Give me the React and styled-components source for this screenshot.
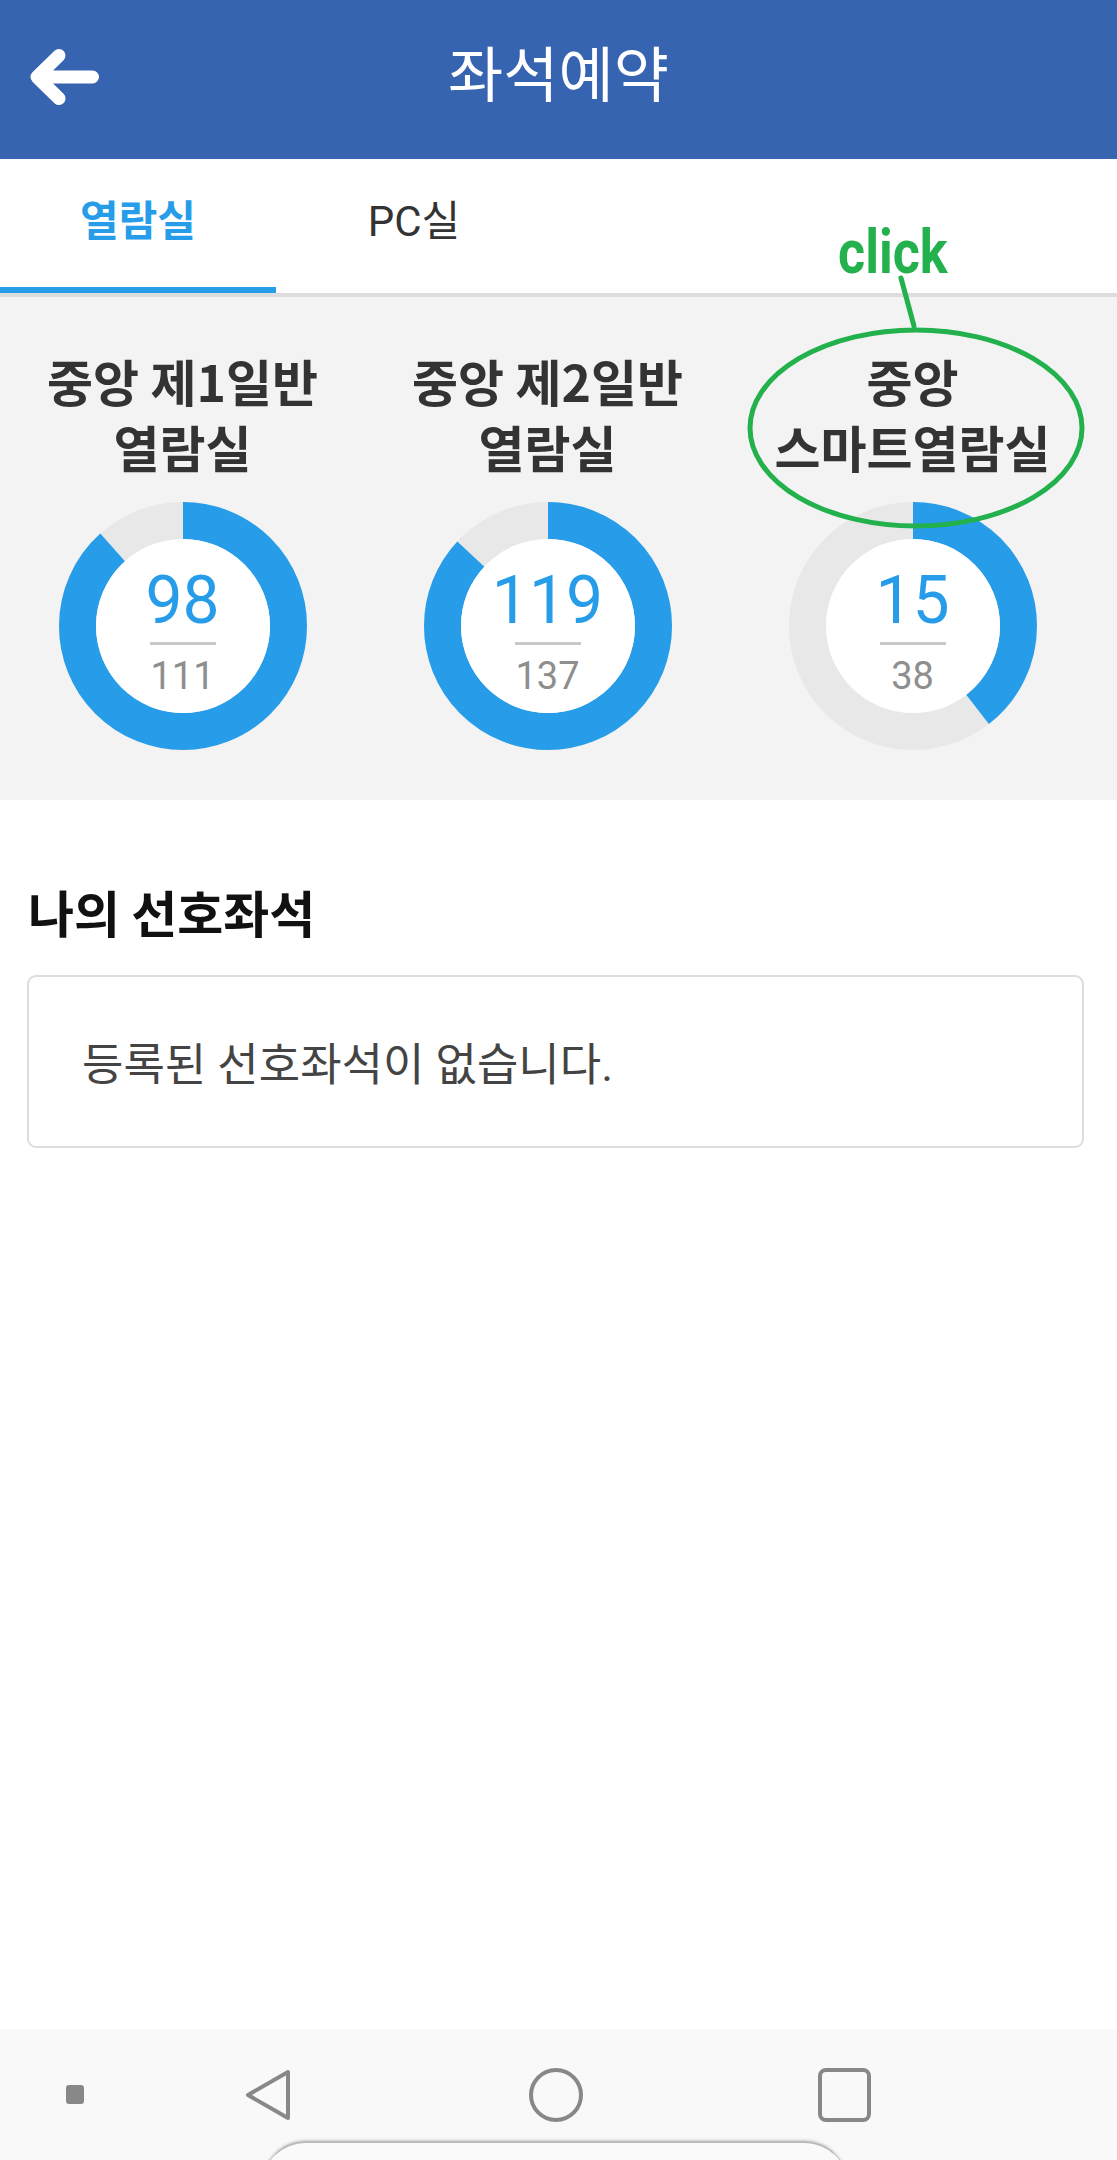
import styled, { createGlobalStyle } from "styled-components"

const GlobalStyle = createGlobalStyle`
  html, body {
    margin: 0;
    padding: 0;
    background: #ffffff;
  }
  body {
    font-family: Roboto, "Noto Sans CJK KR", sans-serif;
  }
`

const rooms = [
    { name: ["중앙 제1일반", "열람실"], free: 98, total: 111 },
    { name: ["중앙 제2일반", "열람실"], free: 119, total: 137 },
    { name: ["중앙", "스마트열람실"], free: 15, total: 38 },
]

const Page = styled.div`
    position: relative;
    min-height: 100vh;
    display: flex;
    flex-direction: column;
    overflow: hidden;
`

const Header = styled.header`
    height: 159px;
    background-color: #3764b0;
    display: grid;
    grid-template-columns: 1fr auto 1fr;
    align-items: center;
    padding-bottom: 6px;
    box-sizing: border-box;
`

const BackButton = styled.div`
    padding-left: 29px;
    display: flex;
    align-items: center;
`

const Title = styled.h1`
    margin: 0;
    color: #ffffff;
    font-size: 60px;
    font-weight: 400;
    line-height: 1.2;
`

const Tabs = styled.nav`
    display: flex;
    height: 138px;
    border-bottom: 4px solid #dddddd;
    box-sizing: border-box;
`

const Tab = styled.div`
    width: 276px;
    display: flex;
    align-items: center;
    justify-content: center;
    padding-bottom: 12px;
    box-sizing: border-box;
    font-size: 42px;
    font-weight: ${props => props.$active ? 700 : 400};
    color: ${props => props.$active ? "#279dea" : "#333333"};
    border-bottom: 6px solid ${props => props.$active ? "#279dea" : "transparent"};
`

const Panel = styled.section`
    background-color: #f3f3f3;
    display: grid;
    grid-template-columns: repeat(3, 1fr);
    padding: 50px 22px 49px 0;
`

const Room = styled.div`
    display: flex;
    flex-direction: column;
    align-items: center;
`

const RoomName = styled.div`
    font-family: "Noto Sans CJK KR", sans-serif;
    font-size: 50px;
    font-weight: 700;
    line-height: 66px;
    color: #333333;
    text-align: center;
    white-space: nowrap;
`

const Donut = styled.div`
    margin-top: 22px;
    display: grid;
    width: 250px;
    height: 250px;

    & > * {
        grid-area: 1 / 1;
    }
`

const Counts = styled.div`
    display: flex;
    flex-direction: column;
    align-items: center;
    justify-content: center;
    padding-top: 10px;
`

const Free = styled.div`
    font-size: 66px;
    line-height: 1;
    color: #279dea;
`

const Divider = styled.div`
    width: 66px;
    height: 3px;
    margin-top: 8px;
    background-color: #c8c8c8;
`

const Total = styled.div`
    margin-top: 12px;
    font-size: 38px;
    line-height: 1;
    color: #8e8e8e;
`

const Favorites = styled.section`
    padding: 78px 33px 0 27px;
`

const SectionTitle = styled.h2`
    margin: 0 0 31px 1px;
    font-family: "Noto Sans CJK KR", sans-serif;
    font-size: 50px;
    font-weight: 700;
    line-height: 66px;
    color: #111111;
`

const EmptyBox = styled.div`
    height: 173px;
    box-sizing: border-box;
    border: 2px solid #dddddd;
    border-radius: 9px;
    display: flex;
    align-items: center;
    padding-left: 53px;
    font-size: 45px;
    color: #444444;
`

const NavBar = styled.footer`
    position: relative;
    margin-top: auto;
    height: 131px;
    background-color: #f9f9f9;
    display: flex;
    align-items: center;
    padding: 0 0 0 66px;
    overflow: hidden;
`

const NavItem = styled.div`
    display: flex;
    margin-left: ${props => props.$offset || 0}px;
`

const MenuDot = styled.div`
    width: 18px;
    height: 19px;
    border-radius: 3px;
    background-color: #888888;
`

const Pill = styled.div`
    position: absolute;
    left: 262px;
    top: 112px;
    width: 586px;
    height: 80px;
    border-radius: 44px 44px 0 0;
    border-top: 2px solid #bbbbbb;
    background-color: #fafafa;
    box-shadow: 0 -1px 3px rgba(0, 0, 0, 0.18);
`

const Annotation = styled.div`
    position: absolute;
    left: 0;
    top: 0;
    width: 1117px;
    height: 560px;
    pointer-events: none;
`

const ClickLabel = styled.span`
    position: absolute;
    left: 838px;
    top: 221px;
    font-family: Roboto, sans-serif;
    font-size: 62px;
    font-weight: 700;
    line-height: 1;
    color: #22b14c;
    transform: scaleX(0.84);
    transform-origin: left top;
`

const RING = 105.5
const CIRC = 2 * Math.PI * RING

const Ring = ({ free, total }) => (
    <svg width="250" height="250" viewBox="0 0 250 250">
        <circle cx="125" cy="125" r={RING} fill="none" stroke="#e8e8e8" strokeWidth="37" />
        <circle
            cx="125" cy="125" r={RING} fill="none" stroke="#279dea" strokeWidth="37"
            strokeDasharray={`${(free / total) * CIRC} ${CIRC}`}
            transform="rotate(-90 125 125)"
        />
        <circle cx="125" cy="125" r="87" fill="#ffffff" />
    </svg>
)

const App = () => {
  return (
    <Page>
        <GlobalStyle />
        <Header>
            <BackButton>
                <svg width="70" height="56" viewBox="0 0 70 56">
                    <path d="M63.5 28 H8 M30 6.5 L8 28 L30 49.5" fill="none" stroke="#ffffff"
                        strokeWidth="13" strokeLinecap="round" strokeLinejoin="round" />
                </svg>
            </BackButton>
            <Title>좌석예약</Title>
            <div />
        </Header>

        <Tabs>
            <Tab $active>열람실</Tab>
            <Tab>PC실</Tab>
        </Tabs>

        <Panel>
            {rooms.map(room => (
                <Room key={room.name.join("")}>
                    <RoomName>{room.name[0]}<br />{room.name[1]}</RoomName>
                    <Donut>
                        <Ring free={room.free} total={room.total} />
                        <Counts>
                            <Free>{room.free}</Free>
                            <Divider />
                            <Total>{room.total}</Total>
                        </Counts>
                    </Donut>
                </Room>
            ))}
        </Panel>

        <Favorites>
            <SectionTitle>나의 선호좌석</SectionTitle>
            <EmptyBox>등록된 선호좌석이 없습니다.</EmptyBox>
        </Favorites>

        <NavBar>
            <NavItem><MenuDot /></NavItem>
            <NavItem $offset={160}>
                <svg width="48" height="54" viewBox="0 0 48 54">
                    <path d="M44 4 L4 27 L44 50 Z" fill="none" stroke="#888888" strokeWidth="4" strokeLinejoin="round" />
                </svg>
            </NavItem>
            <NavItem $offset={237}>
                <svg width="54" height="54" viewBox="0 0 54 54">
                    <circle cx="27" cy="27" r="25" fill="none" stroke="#888888" strokeWidth="4" />
                </svg>
            </NavItem>
            <NavItem $offset={235}>
                <svg width="53" height="54" viewBox="0 0 53 54">
                    <rect x="2" y="2" width="49" height="50" rx="6" fill="none" stroke="#888888" strokeWidth="4" />
                </svg>
            </NavItem>
            <Pill />
        </NavBar>

        <Annotation>
            <svg width="1117" height="560" viewBox="0 0 1117 560">
                <line x1="901" y1="278" x2="914" y2="326" stroke="#22b14c" strokeWidth="5" strokeLinecap="round" />
                <ellipse cx="916" cy="428" rx="166" ry="98" fill="none" stroke="#22b14c" strokeWidth="5" />
            </svg>
            <ClickLabel>click</ClickLabel>
        </Annotation>
    </Page>
  )
}

export default App
